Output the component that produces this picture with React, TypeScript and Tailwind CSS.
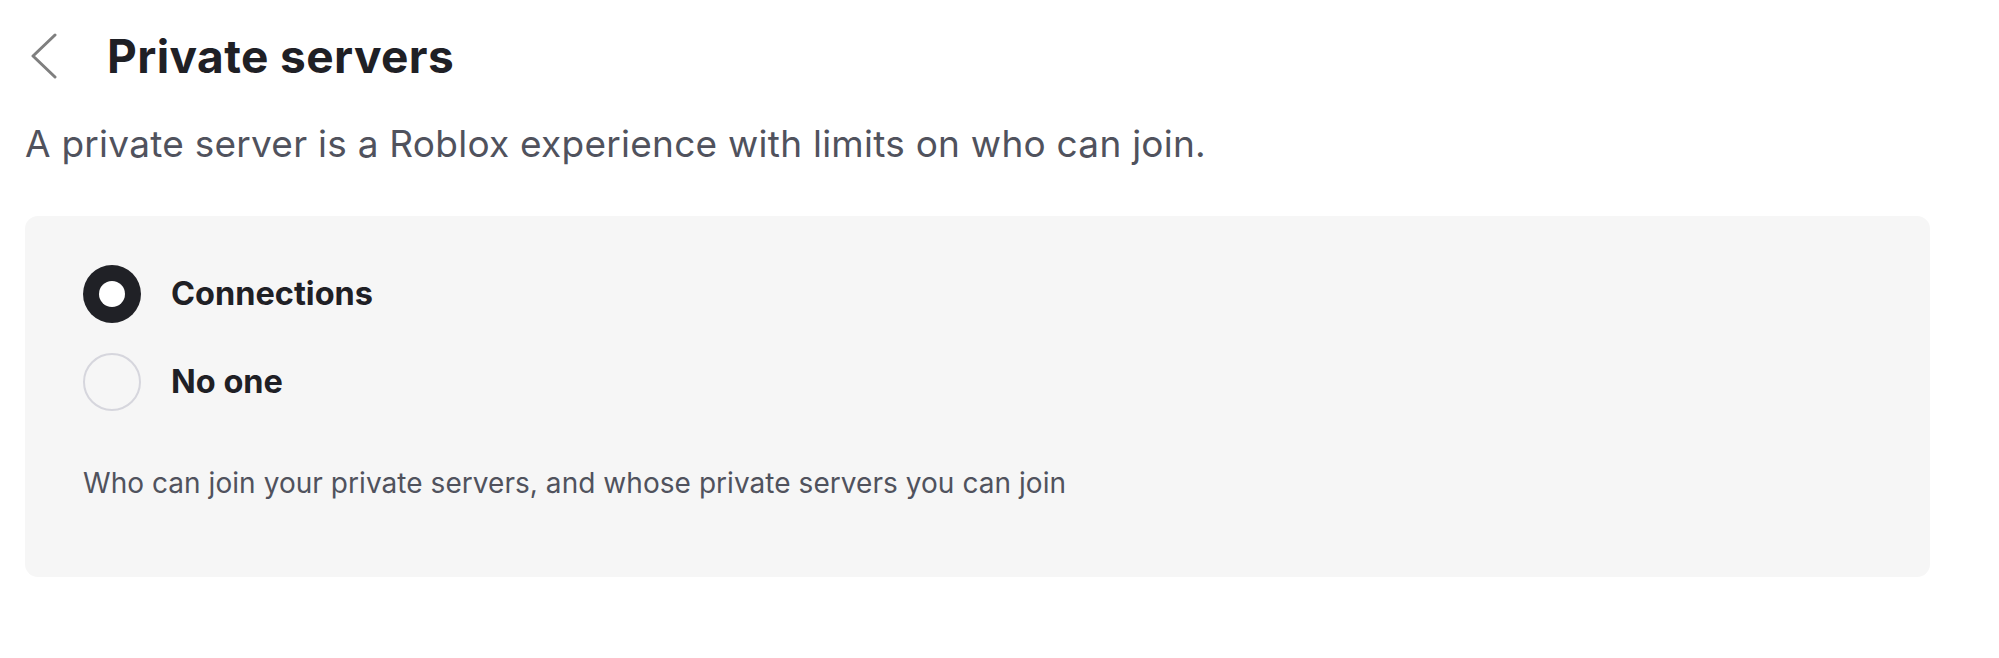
import { useState } from "react";

const options = [
  { id: "connections", label: "Connections" },
  { id: "none", label: "No one" },
];

export default function App() {
  const [selected, setSelected] = useState("connections");

  return (
    <div
      className="min-h-screen bg-white pl-[25px] pr-[69px] pt-[30px]"
      style={{ fontFamily: "Inter, 'Noto Sans', sans-serif" }}
    >
      <div className="flex items-center h-[52px]">
        <button className="ml-[6px] w-[26px] h-[46px] flex items-center justify-center">
          <svg width="26" height="46" viewBox="0 0 26 46" fill="none">
            <polyline
              points="24,2 2,23 24,44"
              stroke="#7f7f7f"
              strokeWidth="3"
              strokeLinecap="round"
              strokeLinejoin="round"
            />
          </svg>
        </button>
        <h1 className="ml-[50px] text-[46px] leading-[52px] font-bold tracking-[0.4px] text-[#1f2025]">
          Private servers
        </h1>
      </div>

      <p className="mt-[40px] text-[37px] leading-[44px] tracking-[0.25px] text-[#50525d]">
        A private server is a Roblox experience with limits on who can join.
      </p>

      <div className="mt-[50px] bg-[#f6f6f6] rounded-[13px] pt-[49px] pb-[76px] pl-[58px]">
        <div className="flex flex-col gap-[30px]">
          {options.map((o) => (
            <button
              key={o.id}
              onClick={() => setSelected(o.id)}
              className="flex items-center h-[58px] text-left"
            >
              {selected === o.id ? (
                <span className="w-[58px] h-[58px] rounded-full bg-[#202126] flex items-center justify-center">
                  <span className="w-[26px] h-[26px] rounded-full bg-white" />
                </span>
              ) : (
                <span className="w-[58px] h-[58px] rounded-full border-2 border-[#d6d6dd]" />
              )}
              <span className="ml-[30px] text-[32.5px] leading-[40px] font-bold text-[#1f2025]">
                {o.label}
              </span>
            </button>
          ))}
        </div>
        <p className="mt-[54px] text-[28px] leading-[36px] tracking-[0.05px] text-[#50525d]">
          Who can join your private servers, and whose private servers you can join
        </p>
      </div>
    </div>
  );
}
